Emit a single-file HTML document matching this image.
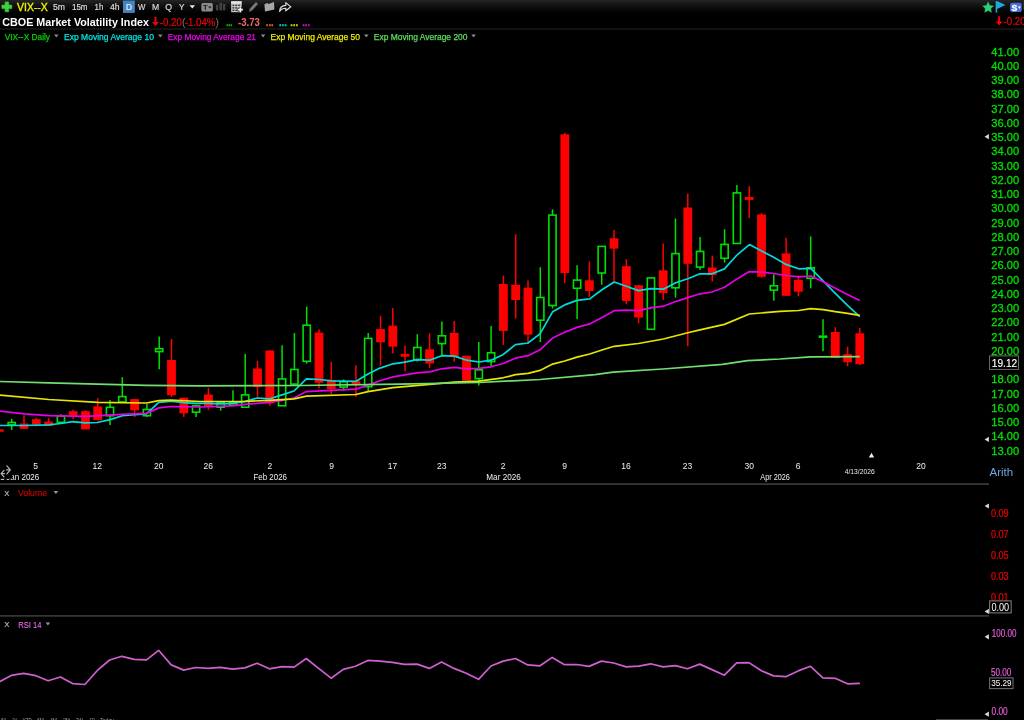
<!DOCTYPE html>
<html><head><meta charset="utf-8"><title>VIX--X chart</title>
<style>
html,body{margin:0;padding:0;background:#000;}
body{width:1024px;height:720px;overflow:hidden;position:relative;font-family:"Liberation Sans",sans-serif;}
#hdr{position:absolute;left:0;top:0;width:1024px;height:14px;background:linear-gradient(#242424 0%,#151515 32%,#060606 72%,#000 100%);}
svg{position:absolute;left:0;top:0;will-change:transform;}
text{white-space:pre;}
</style></head><body>
<div id="hdr"></div>
<svg width="1024" height="720" viewBox="0 0 1024 720" font-family="Liberation Sans, sans-serif">
<path d="M5.1,2 h3.5 v3.1 h3.2 v3.5 h-3.2 v3.2 h-3.5 v-3.2 h-3.2 v-3.5 h3.2 z" fill="#3ed03e" stroke="#3ed03e" stroke-width="0.6" stroke-linejoin="round"/>
<text x="17.0" y="11.0" font-size="11" fill="#f0f000" textLength="30.8" lengthAdjust="spacingAndGlyphs"  stroke="#f0f000" stroke-width="0.35">VIX--X</text>
<text x="53.0" y="10.4" font-size="9.7" fill="#dcdcdc" textLength="12.0" lengthAdjust="spacingAndGlyphs"  stroke="#dcdcdc" stroke-width="0.2">5m</text>
<text x="72.0" y="10.4" font-size="9.7" fill="#dcdcdc" textLength="15.5" lengthAdjust="spacingAndGlyphs"  stroke="#dcdcdc" stroke-width="0.2">15m</text>
<text x="94.5" y="10.4" font-size="9.7" fill="#dcdcdc" textLength="8.8" lengthAdjust="spacingAndGlyphs"  stroke="#dcdcdc" stroke-width="0.2">1h</text>
<text x="110.0" y="10.4" font-size="9.7" fill="#dcdcdc" textLength="9.6" lengthAdjust="spacingAndGlyphs"  stroke="#dcdcdc" stroke-width="0.2">4h</text>
<rect x="123" y="0.5" width="11.8" height="12.4" fill="#4584c0"/>
<text x="126.0" y="10.4" font-size="9.7" fill="#e8f0ff" textLength="6.0" lengthAdjust="spacingAndGlyphs"  stroke="#e8f0ff" stroke-width="0.2">D</text>
<text x="138.0" y="10.4" font-size="9.7" fill="#dcdcdc" textLength="7.4" lengthAdjust="spacingAndGlyphs"  stroke="#dcdcdc" stroke-width="0.2">W</text>
<text x="152.0" y="10.4" font-size="9.7" fill="#dcdcdc" textLength="7.2" lengthAdjust="spacingAndGlyphs"  stroke="#dcdcdc" stroke-width="0.2">M</text>
<text x="165.3" y="10.4" font-size="9.7" fill="#dcdcdc" textLength="6.8" lengthAdjust="spacingAndGlyphs"  stroke="#dcdcdc" stroke-width="0.2">Q</text>
<text x="179.0" y="10.4" font-size="9.7" fill="#dcdcdc" textLength="5.4" lengthAdjust="spacingAndGlyphs"  stroke="#dcdcdc" stroke-width="0.2">Y</text>
<polygon points="189.6,5.2 195,5.2 192.3,8.6" fill="#eee"/>
<rect x="201.4" y="3" width="11.4" height="8.6" rx="1.6" fill="#8c8c8c"/>
<text x="203.0" y="10.3" font-size="7.6" fill="#1a1a1a" font-weight="bold" >T</text>
<polygon points="208.2,6.4 211.6,6.4 209.9,8.8" fill="#1a1a1a"/>
<g fill="#424242"><rect x="216" y="4.9" width="2.3" height="5.5"/><rect x="219.5" y="2.9" width="2.6" height="7.5"/><rect x="223" y="3.9" width="2.3" height="6.5"/></g>
<g><rect x="231.2" y="1.3" width="10.4" height="10.9" fill="#cfcfcf"/><rect x="231.2" y="1.3" width="10.4" height="2.2" fill="#e6e6e6"/><g fill="#3a3a3a"><rect x="232.4" y="4.6" width="2" height="1.5"/><rect x="235.3" y="4.6" width="2" height="1.5"/><rect x="238.2" y="4.6" width="2" height="1.5"/><rect x="232.4" y="7.1" width="2" height="1.5"/><rect x="235.3" y="7.1" width="2" height="1.5"/><rect x="232.4" y="9.6" width="2" height="1.5"/><rect x="235.3" y="9.6" width="2" height="1.5"/></g><path d="M240.3,6.9 v5.6 M237.5,9.7 h5.6" stroke="#222" stroke-width="3.2"/><path d="M240.3,7.3 v4.9 M237.9,9.7 h4.9" stroke="#f4f4f4" stroke-width="1.7"/></g>
<path d="M248.8,11.8 L249.8,8.6 L255.9,2.1 L258.1,4.1 L252,10.8 Z" fill="#6a6a6a"/><path d="M251,9.4 L256.6,3.4" stroke="#8e8e8e" stroke-width="1"/>
<path d="M264.4,4.2 L267.4,3 L268.6,4 L274,2 L274.4,9.6 L265,11.6 Z" fill="#a8a8a8"/>
<path d="M279.6,11.4 C279.8,7.6 282,5.6 285.8,5.4 L285.8,2.6 L290.8,6.8 L285.8,10.8 L285.8,8.2 C283,8.2 281,9 279.6,11.4 Z" fill="none" stroke="#e0e0e0" stroke-width="1.1" stroke-linejoin="round"/>
<polygon points="988.10,1.95 989.78,5.39 993.57,5.92 990.81,8.58 991.48,12.35 988.10,10.55 984.72,12.35 985.39,8.58 982.63,5.92 986.42,5.39" fill="#2fd07a" stroke="#2fd07a" stroke-width="0.4" stroke-linejoin="round"/>
<path d="M996.4,1.2 L996.4,12.6" stroke="#1ea8e0" stroke-width="1.5"/><polygon points="997,1.1 1005.5,5.1 997,8.9" fill="#1ea8e0"/>
<rect x="1010.2" y="2.8" width="11.5" height="9.2" rx="1.7" fill="#4a6fd8"/>
<text x="1011.6" y="10.7" font-size="8.8" fill="#fff" font-weight="bold"  stroke="#fff" stroke-width="0.3">S</text>
<polygon points="1017.9,6.6 1020.9,6.6 1019.4,9.1" fill="#fff"/>
<rect x="1023" y="1.4" width="1" height="8.6" fill="#2c2c2c"/>
<text x="2.3" y="25.6" font-size="10.6" fill="#fff" textLength="146.6" lengthAdjust="spacingAndGlyphs" font-weight="bold" >CBOE Market Volatility Index</text>
<path d="M155.5,16.7 V23.0" stroke="#ff0000" stroke-width="1.9" fill="none"/><polygon points="152.1,21.9 158.9,21.9 155.5,26.0" fill="#ff0000"/>
<text x="159.8" y="25.9" font-size="10.6" fill="#f00000" textLength="22.0" lengthAdjust="spacingAndGlyphs"  stroke="#f00000" stroke-width="0.2">-0.20</text>
<text x="182.0" y="25.9" font-size="10.4" fill="#778" >(</text>
<text x="184.8" y="25.9" font-size="10.6" fill="#f00000" textLength="30.6" lengthAdjust="spacingAndGlyphs"  stroke="#f00000" stroke-width="0.2">-1.04%</text>
<text x="215.6" y="25.9" font-size="10.4" fill="#778" >)</text>
<text x="226.3" y="26.0" font-size="11" fill="#00d000" textLength="6.0" lengthAdjust="spacingAndGlyphs" font-weight="bold"  stroke="#00d000" stroke-width="0.3">...</text>
<text x="238.0" y="25.9" font-size="10.6" fill="#f06a6a" textLength="21.8" lengthAdjust="spacingAndGlyphs" font-weight="bold" >-3.73</text>
<text x="265.8" y="26.0" font-size="11" fill="#e07000" textLength="7.8" lengthAdjust="spacingAndGlyphs" font-weight="bold"  stroke="#e07000" stroke-width="0.3">...</text>
<text x="279.0" y="26.0" font-size="11" fill="#00d0d0" textLength="7.8" lengthAdjust="spacingAndGlyphs" font-weight="bold"  stroke="#00d0d0" stroke-width="0.3">...</text>
<text x="290.3" y="26.0" font-size="11" fill="#d8d800" textLength="7.8" lengthAdjust="spacingAndGlyphs" font-weight="bold"  stroke="#d8d800" stroke-width="0.3">...</text>
<text x="302.2" y="26.0" font-size="11" fill="#e000e0" textLength="7.8" lengthAdjust="spacingAndGlyphs" font-weight="bold"  stroke="#e000e0" stroke-width="0.3">...</text>
<path d="M999.1,16.3 V22.6" stroke="#ff0000" stroke-width="1.9" fill="none"/><polygon points="995.7,21.5 1002.5,21.5 999.1,25.6" fill="#ff0000"/>
<text x="1003.6" y="24.9" font-size="10.2" fill="#f00000" textLength="22.0" lengthAdjust="spacingAndGlyphs"  stroke="#f00000" stroke-width="0.2">-0.20</text>
<text x="4.7" y="39.6" font-size="9.2" fill="#00d400" textLength="45.3" lengthAdjust="spacingAndGlyphs"  stroke="#00d400" stroke-width="0.25">VIX--X Daily</text>
<polygon points="54.0,34.6 58.6,34.6 56.3,37.4" fill="#888"/>
<text x="64.0" y="39.6" font-size="9.2" fill="#00e4e4" textLength="89.9" lengthAdjust="spacingAndGlyphs"  stroke="#00e4e4" stroke-width="0.25">Exp Moving Average 10</text>
<polygon points="158.0,34.6 162.6,34.6 160.3,37.4" fill="#888"/>
<text x="167.7" y="39.6" font-size="9.2" fill="#f000f0" textLength="88.3" lengthAdjust="spacingAndGlyphs"  stroke="#f000f0" stroke-width="0.25">Exp Moving Average 21</text>
<polygon points="260.8,34.6 265.4,34.6 263.1,37.4" fill="#888"/>
<text x="270.5" y="39.6" font-size="9.2" fill="#ecec00" textLength="89.5" lengthAdjust="spacingAndGlyphs"  stroke="#ecec00" stroke-width="0.25">Exp Moving Average 50</text>
<polygon points="364.0,34.6 368.6,34.6 366.3,37.4" fill="#888"/>
<text x="373.8" y="39.6" font-size="9.2" fill="#5ce05c" textLength="93.7" lengthAdjust="spacingAndGlyphs"  stroke="#5ce05c" stroke-width="0.25">Exp Moving Average 200</text>
<polygon points="471.3,34.6 475.9,34.6 473.6,37.4" fill="#888"/>
<rect x="-5.0" y="429.4" width="8.8" height="2.3" fill="#ff0000"/>
<line x1="11.7" y1="419.0" x2="11.7" y2="422.5" stroke="#00e000" stroke-width="1.5"/>
<line x1="11.7" y1="424.9" x2="11.7" y2="430.0" stroke="#00e000" stroke-width="1.5"/>
<rect x="8.1" y="422.5" width="7.2" height="2.4" fill="none" stroke="#00e000" stroke-width="1.6"/>
<line x1="24.0" y1="415.3" x2="24.0" y2="428.8" stroke="#ff0000" stroke-width="1.5"/>
<rect x="19.6" y="423.5" width="8.8" height="5.3" fill="#ff0000"/>
<line x1="36.3" y1="417.7" x2="36.3" y2="426.4" stroke="#ff0000" stroke-width="1.5"/>
<rect x="31.9" y="419.2" width="8.8" height="5.3" fill="#ff0000"/>
<line x1="48.6" y1="418.2" x2="48.6" y2="426.0" stroke="#ff0000" stroke-width="1.5"/>
<rect x="44.2" y="421.6" width="8.8" height="4.4" fill="#ff0000"/>
<line x1="60.9" y1="414.3" x2="60.9" y2="416.1" stroke="#00e000" stroke-width="1.5"/>
<rect x="57.3" y="416.1" width="7.2" height="6.2" fill="none" stroke="#00e000" stroke-width="1.6"/>
<line x1="73.2" y1="409.5" x2="73.2" y2="419.2" stroke="#ff0000" stroke-width="1.5"/>
<rect x="68.8" y="411.2" width="8.8" height="4.5" fill="#ff0000"/>
<line x1="85.5" y1="410.3" x2="85.5" y2="429.4" stroke="#ff0000" stroke-width="1.5"/>
<rect x="81.1" y="411.2" width="8.8" height="18.2" fill="#ff0000"/>
<line x1="97.7" y1="398.1" x2="97.7" y2="420.2" stroke="#ff0000" stroke-width="1.5"/>
<rect x="93.3" y="406.5" width="8.8" height="13.7" fill="#ff0000"/>
<line x1="110.0" y1="400.1" x2="110.0" y2="407.3" stroke="#00e000" stroke-width="1.5"/>
<line x1="110.0" y1="415.7" x2="110.0" y2="424.9" stroke="#00e000" stroke-width="1.5"/>
<rect x="106.4" y="407.3" width="7.2" height="8.4" fill="none" stroke="#00e000" stroke-width="1.6"/>
<line x1="122.3" y1="377.2" x2="122.3" y2="396.6" stroke="#00e000" stroke-width="1.5"/>
<rect x="118.7" y="396.6" width="7.2" height="5.4" fill="none" stroke="#00e000" stroke-width="1.6"/>
<line x1="134.6" y1="399.1" x2="134.6" y2="417.1" stroke="#ff0000" stroke-width="1.5"/>
<rect x="130.2" y="399.1" width="8.8" height="11.3" fill="#ff0000"/>
<line x1="146.9" y1="404.0" x2="146.9" y2="409.5" stroke="#00e000" stroke-width="1.5"/>
<line x1="146.9" y1="415.7" x2="146.9" y2="417.0" stroke="#00e000" stroke-width="1.5"/>
<rect x="143.3" y="409.5" width="7.2" height="6.2" fill="none" stroke="#00e000" stroke-width="1.6"/>
<line x1="159.2" y1="336.6" x2="159.2" y2="348.7" stroke="#00e000" stroke-width="1.5"/>
<line x1="159.2" y1="351.6" x2="159.2" y2="369.2" stroke="#00e000" stroke-width="1.5"/>
<rect x="155.6" y="348.7" width="7.2" height="2.9" fill="none" stroke="#00e000" stroke-width="1.6"/>
<line x1="171.5" y1="338.9" x2="171.5" y2="397.1" stroke="#ff0000" stroke-width="1.5"/>
<rect x="167.1" y="360.0" width="8.8" height="35.2" fill="#ff0000"/>
<line x1="183.8" y1="397.7" x2="183.8" y2="417.0" stroke="#ff0000" stroke-width="1.5"/>
<rect x="179.4" y="397.7" width="8.8" height="15.5" fill="#ff0000"/>
<line x1="196.1" y1="412.2" x2="196.1" y2="417.0" stroke="#00e000" stroke-width="1.5"/>
<rect x="192.5" y="405.9" width="7.2" height="6.3" fill="none" stroke="#00e000" stroke-width="1.6"/>
<line x1="208.4" y1="387.7" x2="208.4" y2="410.1" stroke="#ff0000" stroke-width="1.5"/>
<rect x="204.0" y="394.5" width="8.8" height="11.7" fill="#ff0000"/>
<line x1="220.7" y1="407.2" x2="220.7" y2="410.7" stroke="#00e000" stroke-width="1.5"/>
<rect x="217.1" y="402.9" width="7.2" height="4.3" fill="none" stroke="#00e000" stroke-width="1.6"/>
<line x1="233.0" y1="390.2" x2="233.0" y2="402.3" stroke="#00e000" stroke-width="1.5"/>
<rect x="229.4" y="402.3" width="7.2" height="2.9" fill="none" stroke="#00e000" stroke-width="1.6"/>
<line x1="245.2" y1="353.9" x2="245.2" y2="394.9" stroke="#00e000" stroke-width="1.5"/>
<rect x="241.6" y="394.9" width="7.2" height="12.3" fill="none" stroke="#00e000" stroke-width="1.6"/>
<line x1="257.5" y1="360.9" x2="257.5" y2="397.0" stroke="#ff0000" stroke-width="1.5"/>
<rect x="253.1" y="368.5" width="8.8" height="18.6" fill="#ff0000"/>
<line x1="269.8" y1="350.5" x2="269.8" y2="405.8" stroke="#ff0000" stroke-width="1.5"/>
<rect x="265.4" y="350.5" width="8.8" height="52.8" fill="#ff0000"/>
<line x1="282.1" y1="345.3" x2="282.1" y2="378.9" stroke="#00e000" stroke-width="1.5"/>
<rect x="278.5" y="378.9" width="7.2" height="26.9" fill="none" stroke="#00e000" stroke-width="1.6"/>
<line x1="294.4" y1="333.0" x2="294.4" y2="369.5" stroke="#00e000" stroke-width="1.5"/>
<rect x="290.8" y="369.5" width="7.2" height="14.6" fill="none" stroke="#00e000" stroke-width="1.6"/>
<line x1="306.7" y1="306.6" x2="306.7" y2="325.2" stroke="#00e000" stroke-width="1.5"/>
<line x1="306.7" y1="361.3" x2="306.7" y2="363.6" stroke="#00e000" stroke-width="1.5"/>
<rect x="303.1" y="325.2" width="7.2" height="36.1" fill="none" stroke="#00e000" stroke-width="1.6"/>
<line x1="319.0" y1="329.5" x2="319.0" y2="388.6" stroke="#ff0000" stroke-width="1.5"/>
<rect x="314.6" y="332.6" width="8.8" height="50.2" fill="#ff0000"/>
<line x1="331.3" y1="361.7" x2="331.3" y2="394.1" stroke="#ff0000" stroke-width="1.5"/>
<rect x="326.9" y="379.8" width="8.8" height="9.2" fill="#ff0000"/>
<line x1="343.6" y1="379.5" x2="343.6" y2="381.8" stroke="#00e000" stroke-width="1.5"/>
<line x1="343.6" y1="387.1" x2="343.6" y2="390.6" stroke="#00e000" stroke-width="1.5"/>
<rect x="340.0" y="381.8" width="7.2" height="5.3" fill="none" stroke="#00e000" stroke-width="1.6"/>
<line x1="355.9" y1="365.2" x2="355.9" y2="396.8" stroke="#ff0000" stroke-width="1.5"/>
<rect x="351.5" y="380.8" width="8.8" height="3.9" fill="#ff0000"/>
<line x1="368.2" y1="333.0" x2="368.2" y2="338.4" stroke="#00e000" stroke-width="1.5"/>
<line x1="368.2" y1="386.7" x2="368.2" y2="391.0" stroke="#00e000" stroke-width="1.5"/>
<rect x="364.6" y="338.4" width="7.2" height="48.3" fill="none" stroke="#00e000" stroke-width="1.6"/>
<line x1="380.5" y1="315.8" x2="380.5" y2="365.8" stroke="#ff0000" stroke-width="1.5"/>
<rect x="376.1" y="329.1" width="8.8" height="13.2" fill="#ff0000"/>
<line x1="392.8" y1="308.0" x2="392.8" y2="353.5" stroke="#ff0000" stroke-width="1.5"/>
<rect x="388.4" y="325.7" width="8.8" height="20.9" fill="#ff0000"/>
<line x1="405.0" y1="345.4" x2="405.0" y2="371.3" stroke="#ff0000" stroke-width="1.5"/>
<rect x="400.6" y="353.8" width="8.8" height="2.9" fill="#ff0000"/>
<line x1="417.3" y1="334.2" x2="417.3" y2="347.5" stroke="#00e000" stroke-width="1.5"/>
<line x1="417.3" y1="359.6" x2="417.3" y2="361.6" stroke="#00e000" stroke-width="1.5"/>
<rect x="413.7" y="347.5" width="7.2" height="12.1" fill="none" stroke="#00e000" stroke-width="1.6"/>
<line x1="429.6" y1="333.2" x2="429.6" y2="367.8" stroke="#ff0000" stroke-width="1.5"/>
<rect x="425.2" y="349.3" width="8.8" height="14.2" fill="#ff0000"/>
<line x1="441.9" y1="321.5" x2="441.9" y2="335.8" stroke="#00e000" stroke-width="1.5"/>
<line x1="441.9" y1="343.6" x2="441.9" y2="356.1" stroke="#00e000" stroke-width="1.5"/>
<rect x="438.3" y="335.8" width="7.2" height="7.8" fill="none" stroke="#00e000" stroke-width="1.6"/>
<line x1="454.2" y1="320.9" x2="454.2" y2="361.6" stroke="#ff0000" stroke-width="1.5"/>
<rect x="449.8" y="332.9" width="8.8" height="24.2" fill="#ff0000"/>
<rect x="462.1" y="355.7" width="8.8" height="24.8" fill="#ff0000"/>
<line x1="478.8" y1="342.0" x2="478.8" y2="369.8" stroke="#00e000" stroke-width="1.5"/>
<line x1="478.8" y1="378.6" x2="478.8" y2="385.6" stroke="#00e000" stroke-width="1.5"/>
<rect x="475.2" y="369.8" width="7.2" height="8.8" fill="none" stroke="#00e000" stroke-width="1.6"/>
<line x1="491.1" y1="326.0" x2="491.1" y2="352.8" stroke="#00e000" stroke-width="1.5"/>
<line x1="491.1" y1="361.6" x2="491.1" y2="366.0" stroke="#00e000" stroke-width="1.5"/>
<rect x="487.5" y="352.8" width="7.2" height="8.8" fill="none" stroke="#00e000" stroke-width="1.6"/>
<line x1="503.4" y1="275.6" x2="503.4" y2="345.0" stroke="#ff0000" stroke-width="1.5"/>
<rect x="499.0" y="284.0" width="8.8" height="46.9" fill="#ff0000"/>
<line x1="515.7" y1="234.3" x2="515.7" y2="318.6" stroke="#ff0000" stroke-width="1.5"/>
<rect x="511.3" y="284.8" width="8.8" height="15.2" fill="#ff0000"/>
<line x1="528.0" y1="280.5" x2="528.0" y2="344.0" stroke="#ff0000" stroke-width="1.5"/>
<rect x="523.6" y="287.7" width="8.8" height="46.9" fill="#ff0000"/>
<line x1="540.3" y1="267.2" x2="540.3" y2="297.5" stroke="#00e000" stroke-width="1.5"/>
<line x1="540.3" y1="320.2" x2="540.3" y2="342.0" stroke="#00e000" stroke-width="1.5"/>
<rect x="536.7" y="297.5" width="7.2" height="22.7" fill="none" stroke="#00e000" stroke-width="1.6"/>
<line x1="552.5" y1="209.3" x2="552.5" y2="215.1" stroke="#00e000" stroke-width="1.5"/>
<line x1="552.5" y1="305.5" x2="552.5" y2="308.4" stroke="#00e000" stroke-width="1.5"/>
<rect x="548.9" y="215.1" width="7.2" height="90.4" fill="none" stroke="#00e000" stroke-width="1.6"/>
<line x1="564.8" y1="132.7" x2="564.8" y2="282.9" stroke="#ff0000" stroke-width="1.5"/>
<rect x="560.4" y="134.3" width="8.8" height="138.8" fill="#ff0000"/>
<line x1="577.1" y1="265.3" x2="577.1" y2="280.1" stroke="#00e000" stroke-width="1.5"/>
<line x1="577.1" y1="288.3" x2="577.1" y2="319.0" stroke="#00e000" stroke-width="1.5"/>
<rect x="573.5" y="280.1" width="7.2" height="8.2" fill="none" stroke="#00e000" stroke-width="1.6"/>
<line x1="589.4" y1="261.4" x2="589.4" y2="297.1" stroke="#ff0000" stroke-width="1.5"/>
<rect x="585.0" y="280.3" width="8.8" height="10.7" fill="#ff0000"/>
<line x1="601.7" y1="273.0" x2="601.7" y2="284.7" stroke="#00e000" stroke-width="1.5"/>
<rect x="598.1" y="246.4" width="7.2" height="26.6" fill="none" stroke="#00e000" stroke-width="1.6"/>
<line x1="614.0" y1="230.0" x2="614.0" y2="281.4" stroke="#ff0000" stroke-width="1.5"/>
<rect x="609.6" y="238.3" width="8.8" height="10.3" fill="#ff0000"/>
<line x1="626.3" y1="259.3" x2="626.3" y2="304.3" stroke="#ff0000" stroke-width="1.5"/>
<rect x="621.9" y="266.2" width="8.8" height="34.7" fill="#ff0000"/>
<line x1="638.6" y1="285.0" x2="638.6" y2="323.4" stroke="#ff0000" stroke-width="1.5"/>
<rect x="634.2" y="285.3" width="8.8" height="32.2" fill="#ff0000"/>
<rect x="647.3" y="277.9" width="7.2" height="51.4" fill="none" stroke="#00e000" stroke-width="1.6"/>
<line x1="663.2" y1="243.5" x2="663.2" y2="300.0" stroke="#ff0000" stroke-width="1.5"/>
<rect x="658.8" y="270.3" width="8.8" height="22.8" fill="#ff0000"/>
<line x1="675.5" y1="218.5" x2="675.5" y2="253.6" stroke="#00e000" stroke-width="1.5"/>
<line x1="675.5" y1="287.8" x2="675.5" y2="297.6" stroke="#00e000" stroke-width="1.5"/>
<rect x="671.9" y="253.6" width="7.2" height="34.2" fill="none" stroke="#00e000" stroke-width="1.6"/>
<line x1="687.8" y1="193.4" x2="687.8" y2="346.3" stroke="#ff0000" stroke-width="1.5"/>
<rect x="683.4" y="207.5" width="8.8" height="56.3" fill="#ff0000"/>
<line x1="700.1" y1="237.1" x2="700.1" y2="251.4" stroke="#00e000" stroke-width="1.5"/>
<line x1="700.1" y1="267.1" x2="700.1" y2="270.1" stroke="#00e000" stroke-width="1.5"/>
<rect x="696.5" y="251.4" width="7.2" height="15.7" fill="none" stroke="#00e000" stroke-width="1.6"/>
<line x1="712.3" y1="255.6" x2="712.3" y2="281.4" stroke="#ff0000" stroke-width="1.5"/>
<rect x="707.9" y="267.5" width="8.8" height="7.5" fill="#ff0000"/>
<line x1="724.6" y1="229.2" x2="724.6" y2="244.4" stroke="#00e000" stroke-width="1.5"/>
<line x1="724.6" y1="258.3" x2="724.6" y2="262.6" stroke="#00e000" stroke-width="1.5"/>
<rect x="721.0" y="244.4" width="7.2" height="13.9" fill="none" stroke="#00e000" stroke-width="1.6"/>
<line x1="736.9" y1="185.0" x2="736.9" y2="192.9" stroke="#00e000" stroke-width="1.5"/>
<rect x="733.3" y="192.9" width="7.2" height="50.6" fill="none" stroke="#00e000" stroke-width="1.6"/>
<line x1="749.2" y1="186.2" x2="749.2" y2="217.9" stroke="#ff0000" stroke-width="1.5"/>
<rect x="744.8" y="197.0" width="8.8" height="2.9" fill="#ff0000"/>
<line x1="761.5" y1="213.0" x2="761.5" y2="277.8" stroke="#ff0000" stroke-width="1.5"/>
<rect x="757.1" y="214.5" width="8.8" height="62.3" fill="#ff0000"/>
<line x1="773.8" y1="274.5" x2="773.8" y2="285.8" stroke="#00e000" stroke-width="1.5"/>
<line x1="773.8" y1="290.1" x2="773.8" y2="300.7" stroke="#00e000" stroke-width="1.5"/>
<rect x="770.2" y="285.8" width="7.2" height="4.3" fill="none" stroke="#00e000" stroke-width="1.6"/>
<line x1="786.1" y1="237.8" x2="786.1" y2="295.8" stroke="#ff0000" stroke-width="1.5"/>
<rect x="781.7" y="253.4" width="8.8" height="42.4" fill="#ff0000"/>
<line x1="798.4" y1="275.4" x2="798.4" y2="296.3" stroke="#ff0000" stroke-width="1.5"/>
<rect x="794.0" y="279.8" width="8.8" height="11.9" fill="#ff0000"/>
<line x1="810.7" y1="236.4" x2="810.7" y2="267.8" stroke="#00e000" stroke-width="1.5"/>
<line x1="810.7" y1="278.3" x2="810.7" y2="288.4" stroke="#00e000" stroke-width="1.5"/>
<rect x="807.1" y="267.8" width="7.2" height="10.5" fill="none" stroke="#00e000" stroke-width="1.6"/>
<line x1="823.0" y1="319.2" x2="823.0" y2="335.5" stroke="#00e000" stroke-width="1.5"/>
<line x1="823.0" y1="337.8" x2="823.0" y2="351.3" stroke="#00e000" stroke-width="1.5"/>
<rect x="818.6" y="335.4" width="8.8" height="2.5" fill="#00e000"/>
<line x1="835.3" y1="327.2" x2="835.3" y2="358.0" stroke="#ff0000" stroke-width="1.5"/>
<rect x="830.9" y="332.0" width="8.8" height="26.0" fill="#ff0000"/>
<line x1="847.6" y1="346.7" x2="847.6" y2="366.3" stroke="#ff0000" stroke-width="1.5"/>
<rect x="843.2" y="354.2" width="8.8" height="8.0" fill="#ff0000"/>
<line x1="859.8" y1="328.0" x2="859.8" y2="365.0" stroke="#ff0000" stroke-width="1.5"/>
<rect x="855.4" y="333.3" width="8.8" height="30.9" fill="#ff0000"/>
<polyline fill="none" stroke="#00dcdc" stroke-width="1.7" stroke-linejoin="round" stroke-linecap="butt" points="0.0,425.5 23.4,425.5 48.8,424.9 60.7,423.5 72.9,421.6 85.2,422.9 97.1,422.5 110.2,419.6 122.3,415.7 134.4,414.7 146.5,413.8 158.8,402.4 171.0,401.1 183.8,402.6 196.0,403.4 208.2,403.3 220.5,403.9 232.6,403.3 245.3,401.3 257.6,398.0 269.7,398.8 282.0,394.9 294.0,391.0 306.4,378.9 319.1,379.5 331.4,380.8 343.6,381.2 355.7,381.4 368.0,374.0 380.0,368.1 393.0,363.8 405.0,362.1 417.0,359.6 429.6,360.2 441.7,355.7 454.4,356.1 466.7,360.2 479.0,362.0 491.0,360.2 503.0,354.7 515.5,344.6 528.0,343.0 540.0,333.8 552.6,311.8 564.7,304.9 577.0,300.4 589.7,298.9 602.0,289.8 614.2,282.0 626.3,286.3 638.4,290.6 650.7,288.6 663.4,289.2 675.7,282.8 687.8,278.7 700.0,273.8 712.0,273.8 724.5,268.9 737.2,254.8 749.4,244.6 761.6,251.0 773.7,257.3 786.0,264.4 798.7,268.8 810.8,268.4 823.2,281.0 835.3,293.3 847.5,305.3 859.7,316.7"/>
<polyline fill="none" stroke="#e600e6" stroke-width="1.7" stroke-linejoin="round" stroke-linecap="butt" points="0.0,411.2 24.4,413.8 48.8,415.7 86.0,416.3 122.3,414.3 146.5,413.4 158.8,407.9 171.0,406.5 200.0,407.0 232.6,405.8 245.3,404.3 269.7,402.3 282.0,400.4 294.0,398.0 306.4,391.6 355.7,389.2 368.0,385.1 380.0,380.8 393.0,376.9 417.0,372.9 429.6,371.9 441.7,368.8 454.4,367.4 466.7,368.8 479.0,368.4 491.0,366.8 503.0,363.5 515.5,358.2 528.0,355.7 540.0,349.8 552.6,338.1 564.7,332.3 577.0,327.4 589.7,323.9 602.0,317.5 614.2,310.7 626.3,310.1 638.4,310.7 650.7,307.8 663.4,306.2 675.7,301.5 687.8,297.6 700.0,293.8 712.0,292.0 724.5,287.2 737.0,278.9 749.3,271.6 761.6,272.1 773.7,273.5 786.0,275.5 798.7,276.8 810.8,276.0 823.2,281.8 835.3,288.3 847.5,294.5 859.7,300.6"/>
<polyline fill="none" stroke="#e6e600" stroke-width="1.7" stroke-linejoin="round" stroke-linecap="butt" points="0.0,395.2 48.8,399.5 97.7,402.4 146.5,403.0 158.8,400.7 171.0,400.1 200.0,401.5 245.3,401.3 269.7,400.4 294.1,398.8 306.4,396.1 355.7,394.5 368.0,391.6 393.0,387.7 429.6,384.4 454.4,382.1 479.0,381.1 503.0,377.8 515.5,374.6 528.0,373.3 540.0,370.4 552.6,364.1 564.7,361.0 577.0,357.1 589.7,354.0 602.0,350.0 614.2,346.3 638.4,343.5 663.4,339.0 687.8,332.8 700.0,329.8 724.5,324.4 749.3,314.0 780.0,311.4 798.7,310.5 810.8,308.7 823.2,309.7 835.3,311.7 847.5,313.3 859.7,315.3"/>
<polyline fill="none" stroke="#6fe06f" stroke-width="1.7" stroke-linejoin="round" stroke-linecap="butt" points="0.0,381.5 48.8,382.8 97.7,384.1 146.5,385.4 200.0,385.8 300.0,385.5 400.0,384.2 479.0,382.5 540.0,379.5 595.0,374.6 613.0,372.2 663.0,369.0 722.5,364.4 747.5,360.6 780.0,359.0 810.8,356.8 859.7,356.7"/>
<polyline fill="none" stroke="#d060d0" stroke-width="1.7" stroke-linejoin="round" stroke-linecap="butt" points="-1.0,682.0 11.2,675.4 23.6,673.3 35.9,675.7 48.1,680.8 60.4,677.0 72.6,683.6 84.9,684.5 97.1,670.7 109.6,660.0 121.8,656.3 134.3,659.3 146.5,659.8 158.6,650.3 171.2,664.9 183.7,670.1 195.5,667.5 208.2,668.4 220.4,667.3 232.7,669.2 244.9,667.9 257.1,663.2 269.4,668.8 281.9,666.6 294.1,667.1 306.3,658.5 318.6,668.4 331.1,678.2 343.3,669.4 355.5,666.2 367.8,660.4 380.0,661.1 392.3,662.3 404.5,664.3 417.1,664.1 429.3,668.4 441.6,661.9 454.0,668.4 466.3,673.3 478.5,679.3 491.0,666.0 503.2,661.1 515.5,658.5 527.7,664.9 540.0,665.8 552.2,657.4 564.5,664.7 576.7,664.5 589.0,666.4 601.4,661.1 613.7,663.0 626.2,666.9 638.7,666.2 650.7,663.8 663.0,666.9 675.4,665.6 687.5,668.8 699.7,664.1 712.0,669.6 724.4,675.2 736.7,662.8 748.9,662.6 761.4,670.7 773.6,675.9 785.9,676.7 798.1,670.9 810.5,666.3 822.9,677.8 835.2,678.3 847.6,683.8 859.9,683.4"/>
<rect x="0" y="483.4" width="989" height="1.4" fill="#464646"/>
<rect x="0" y="615.1" width="989" height="1.6" fill="#3a3a3a"/>
<rect x="0" y="28" width="1024" height="2" fill="#121212"/>
<rect x="936" y="719" width="52" height="1" fill="#444"/>
<polygon points="984.6,136.7 988.9,134.1 988.9,139.3" fill="#ddd"/>
<polygon points="984.6,439.4 988.9,436.8 988.9,442.0" fill="#ddd"/>
<polygon points="984.6,506.0 988.9,503.4 988.9,508.6" fill="#ddd"/>
<polygon points="984.6,611.4 988.9,608.8 988.9,614.0" fill="#ddd"/>
<polygon points="984.6,636.8 988.9,634.2 988.9,639.4" fill="#ddd"/>
<polygon points="984.6,714.2 988.9,711.6 988.9,716.8" fill="#ddd"/>
<polygon points="868.8,457.5 874.2,457.5 871.5,452.8" fill="#eee"/>
<text x="991.3" y="55.7" font-size="11.4" fill="#00e000" textLength="27.8" lengthAdjust="spacingAndGlyphs"  stroke="#00e000" stroke-width="0.3">41.00</text>
<text x="991.3" y="69.9" font-size="11.4" fill="#00e000" textLength="27.8" lengthAdjust="spacingAndGlyphs"  stroke="#00e000" stroke-width="0.3">40.00</text>
<text x="991.3" y="84.2" font-size="11.4" fill="#00e000" textLength="27.8" lengthAdjust="spacingAndGlyphs"  stroke="#00e000" stroke-width="0.3">39.00</text>
<text x="991.3" y="98.4" font-size="11.4" fill="#00e000" textLength="27.8" lengthAdjust="spacingAndGlyphs"  stroke="#00e000" stroke-width="0.3">38.00</text>
<text x="991.3" y="112.7" font-size="11.4" fill="#00e000" textLength="27.8" lengthAdjust="spacingAndGlyphs"  stroke="#00e000" stroke-width="0.3">37.00</text>
<text x="991.3" y="126.9" font-size="11.4" fill="#00e000" textLength="27.8" lengthAdjust="spacingAndGlyphs"  stroke="#00e000" stroke-width="0.3">36.00</text>
<text x="991.3" y="141.2" font-size="11.4" fill="#00e000" textLength="27.8" lengthAdjust="spacingAndGlyphs"  stroke="#00e000" stroke-width="0.3">35.00</text>
<text x="991.3" y="155.4" font-size="11.4" fill="#00e000" textLength="27.8" lengthAdjust="spacingAndGlyphs"  stroke="#00e000" stroke-width="0.3">34.00</text>
<text x="991.3" y="169.7" font-size="11.4" fill="#00e000" textLength="27.8" lengthAdjust="spacingAndGlyphs"  stroke="#00e000" stroke-width="0.3">33.00</text>
<text x="991.3" y="183.9" font-size="11.4" fill="#00e000" textLength="27.8" lengthAdjust="spacingAndGlyphs"  stroke="#00e000" stroke-width="0.3">32.00</text>
<text x="991.3" y="198.1" font-size="11.4" fill="#00e000" textLength="27.8" lengthAdjust="spacingAndGlyphs"  stroke="#00e000" stroke-width="0.3">31.00</text>
<text x="991.3" y="212.4" font-size="11.4" fill="#00e000" textLength="27.8" lengthAdjust="spacingAndGlyphs"  stroke="#00e000" stroke-width="0.3">30.00</text>
<text x="991.3" y="226.6" font-size="11.4" fill="#00e000" textLength="27.8" lengthAdjust="spacingAndGlyphs"  stroke="#00e000" stroke-width="0.3">29.00</text>
<text x="991.3" y="240.9" font-size="11.4" fill="#00e000" textLength="27.8" lengthAdjust="spacingAndGlyphs"  stroke="#00e000" stroke-width="0.3">28.00</text>
<text x="991.3" y="255.1" font-size="11.4" fill="#00e000" textLength="27.8" lengthAdjust="spacingAndGlyphs"  stroke="#00e000" stroke-width="0.3">27.00</text>
<text x="991.3" y="269.4" font-size="11.4" fill="#00e000" textLength="27.8" lengthAdjust="spacingAndGlyphs"  stroke="#00e000" stroke-width="0.3">26.00</text>
<text x="991.3" y="283.6" font-size="11.4" fill="#00e000" textLength="27.8" lengthAdjust="spacingAndGlyphs"  stroke="#00e000" stroke-width="0.3">25.00</text>
<text x="991.3" y="297.8" font-size="11.4" fill="#00e000" textLength="27.8" lengthAdjust="spacingAndGlyphs"  stroke="#00e000" stroke-width="0.3">24.00</text>
<text x="991.3" y="312.1" font-size="11.4" fill="#00e000" textLength="27.8" lengthAdjust="spacingAndGlyphs"  stroke="#00e000" stroke-width="0.3">23.00</text>
<text x="991.3" y="326.3" font-size="11.4" fill="#00e000" textLength="27.8" lengthAdjust="spacingAndGlyphs"  stroke="#00e000" stroke-width="0.3">22.00</text>
<text x="991.3" y="340.6" font-size="11.4" fill="#00e000" textLength="27.8" lengthAdjust="spacingAndGlyphs"  stroke="#00e000" stroke-width="0.3">21.00</text>
<text x="991.3" y="354.8" font-size="11.4" fill="#00e000" textLength="27.8" lengthAdjust="spacingAndGlyphs"  stroke="#00e000" stroke-width="0.3">20.00</text>
<text x="991.3" y="369.1" font-size="11.4" fill="#00e000" textLength="27.8" lengthAdjust="spacingAndGlyphs"  stroke="#00e000" stroke-width="0.3">19.00</text>
<text x="991.3" y="383.3" font-size="11.4" fill="#00e000" textLength="27.8" lengthAdjust="spacingAndGlyphs"  stroke="#00e000" stroke-width="0.3">18.00</text>
<text x="991.3" y="397.6" font-size="11.4" fill="#00e000" textLength="27.8" lengthAdjust="spacingAndGlyphs"  stroke="#00e000" stroke-width="0.3">17.00</text>
<text x="991.3" y="411.8" font-size="11.4" fill="#00e000" textLength="27.8" lengthAdjust="spacingAndGlyphs"  stroke="#00e000" stroke-width="0.3">16.00</text>
<text x="991.3" y="426.0" font-size="11.4" fill="#00e000" textLength="27.8" lengthAdjust="spacingAndGlyphs"  stroke="#00e000" stroke-width="0.3">15.00</text>
<text x="991.3" y="440.3" font-size="11.4" fill="#00e000" textLength="27.8" lengthAdjust="spacingAndGlyphs"  stroke="#00e000" stroke-width="0.3">14.00</text>
<text x="991.3" y="454.5" font-size="11.4" fill="#00e000" textLength="27.8" lengthAdjust="spacingAndGlyphs"  stroke="#00e000" stroke-width="0.3">13.00</text>
<rect x="989.5" y="355.9" width="29.1" height="13.5" fill="#000"/><rect x="989.5" y="355.9" width="29.1" height="13.5" fill="none" stroke="#999" stroke-opacity="0.75" stroke-width="0.9"/>
<text x="991.8" y="366.9" font-size="11.2" fill="#fff" textLength="25.4" lengthAdjust="spacingAndGlyphs"  stroke="#fff" stroke-width="0.15">19.12</text>
<text x="989.6" y="476.4" font-size="11.4" fill="#6fa8dc" textLength="23.6" lengthAdjust="spacingAndGlyphs" >Arith</text>
<text x="990.9" y="516.5" font-size="10.2" fill="#ee0000" textLength="17.8" lengthAdjust="spacingAndGlyphs"  stroke="#ee0000" stroke-width="0.2">0.09</text>
<text x="990.9" y="537.6" font-size="10.2" fill="#ee0000" textLength="17.8" lengthAdjust="spacingAndGlyphs"  stroke="#ee0000" stroke-width="0.2">0.07</text>
<text x="990.9" y="558.7" font-size="10.2" fill="#ee0000" textLength="17.8" lengthAdjust="spacingAndGlyphs"  stroke="#ee0000" stroke-width="0.2">0.05</text>
<text x="990.9" y="579.8" font-size="10.2" fill="#ee0000" textLength="17.8" lengthAdjust="spacingAndGlyphs"  stroke="#ee0000" stroke-width="0.2">0.03</text>
<text x="990.9" y="600.9" font-size="10.2" fill="#ee0000" textLength="17.8" lengthAdjust="spacingAndGlyphs"  stroke="#ee0000" stroke-width="0.2">0.01</text>
<rect x="989.6" y="600.9" width="21.6" height="12" fill="#000" stroke="#777" stroke-width="1.1"/>
<text x="991.4" y="610.9" font-size="11" fill="#fff" textLength="17.8" lengthAdjust="spacingAndGlyphs" >0.00</text>
<text x="991.8" y="636.7" font-size="10.2" fill="#f060e0" textLength="24.6" lengthAdjust="spacingAndGlyphs"  stroke="#f060e0" stroke-width="0.15">100.00</text>
<text x="990.9" y="676.0" font-size="10.2" fill="#f060e0" textLength="20.4" lengthAdjust="spacingAndGlyphs"  stroke="#f060e0" stroke-width="0.15">50.00</text>
<text x="991.5" y="715.3" font-size="10.2" fill="#f060e0" textLength="16.2" lengthAdjust="spacingAndGlyphs"  stroke="#f060e0" stroke-width="0.15">0.00</text>
<rect x="989.6" y="677.9" width="23.4" height="10.7" fill="#000" stroke="#6c6c6c" stroke-width="1.1"/>
<text x="991.2" y="686.3" font-size="9.2" fill="#fff" textLength="20.4" lengthAdjust="spacingAndGlyphs" >35.29</text>
<text x="35.5" y="469.0" font-size="8.5" fill="#f0f0f0" text-anchor="middle" >5</text>
<text x="97.3" y="469.0" font-size="8.5" fill="#f0f0f0" text-anchor="middle" >12</text>
<text x="158.7" y="469.0" font-size="8.5" fill="#f0f0f0" text-anchor="middle" >20</text>
<text x="208.3" y="469.0" font-size="8.5" fill="#f0f0f0" text-anchor="middle" >26</text>
<text x="269.8" y="469.0" font-size="8.5" fill="#f0f0f0" text-anchor="middle" >2</text>
<text x="331.5" y="469.0" font-size="8.5" fill="#f0f0f0" text-anchor="middle" >9</text>
<text x="392.5" y="469.0" font-size="8.5" fill="#f0f0f0" text-anchor="middle" >17</text>
<text x="441.7" y="469.0" font-size="8.5" fill="#f0f0f0" text-anchor="middle" >23</text>
<text x="503.2" y="469.0" font-size="8.5" fill="#f0f0f0" text-anchor="middle" >2</text>
<text x="564.5" y="469.0" font-size="8.5" fill="#f0f0f0" text-anchor="middle" >9</text>
<text x="626.0" y="469.0" font-size="8.5" fill="#f0f0f0" text-anchor="middle" >16</text>
<text x="687.6" y="469.0" font-size="8.5" fill="#f0f0f0" text-anchor="middle" >23</text>
<text x="749.2" y="469.0" font-size="8.5" fill="#f0f0f0" text-anchor="middle" >30</text>
<text x="798.2" y="469.0" font-size="8.5" fill="#f0f0f0" text-anchor="middle" >6</text>
<text x="921.0" y="469.0" font-size="8.5" fill="#f0f0f0" text-anchor="middle" >20</text>
<text x="859.7" y="474.2" font-size="6.6" fill="#e8e8e8" text-anchor="middle" textLength="30.0" lengthAdjust="spacingAndGlyphs" >4/13/2026</text>
<text x="253.5" y="479.8" font-size="9" fill="#f0f0f0" textLength="33.5" lengthAdjust="spacingAndGlyphs" >Feb 2026</text>
<text x="486.3" y="479.8" font-size="9" fill="#f0f0f0" textLength="34.5" lengthAdjust="spacingAndGlyphs" >Mar 2026</text>
<text x="760.3" y="479.8" font-size="9" fill="#f0f0f0" textLength="29.6" lengthAdjust="spacingAndGlyphs" >Apr 2026</text>
<text x="6.3" y="479.8" font-size="9" fill="#f0f0f0" textLength="33.0" lengthAdjust="spacingAndGlyphs" >Jan 2026</text>
<text x="-12.5" y="479.8" font-size="9" fill="#f0f0f0" textLength="17.3" lengthAdjust="spacingAndGlyphs" >2025</text>
<rect x="0" y="462" width="12.4" height="16.7" fill="#000"/>
<text x="4.3" y="495.7" font-size="7.8" fill="#a4a4a4" textLength="5.2" lengthAdjust="spacingAndGlyphs" font-weight="bold" >X</text>
<text x="17.9" y="496.3" font-size="9.4" fill="#cc0000" textLength="29.3" lengthAdjust="spacingAndGlyphs"  stroke="#cc0000" stroke-width="0.15">Volume</text>
<polygon points="53.6,491 58.2,491 55.9,494" fill="#999"/>
<text x="4.3" y="627.1" font-size="7.8" fill="#a4a4a4" textLength="5.2" lengthAdjust="spacingAndGlyphs" font-weight="bold" >X</text>
<text x="18.3" y="627.8" font-size="9.4" fill="#dc6cdc" textLength="23.2" lengthAdjust="spacingAndGlyphs"  stroke="#dc6cdc" stroke-width="0.15">RSI 14</text>
<polygon points="45.7,622.6 50.1,622.6 47.9,625.5" fill="#999"/>
<text x="1.2" y="722.8" font-size="6.5" fill="#9a9a9a" textLength="5.0" lengthAdjust="spacingAndGlyphs" >5Y</text>
<text x="12.0" y="722.8" font-size="6.5" fill="#9a9a9a" textLength="5.0" lengthAdjust="spacingAndGlyphs" >1Y</text>
<text x="22.5" y="722.8" font-size="6.5" fill="#9a9a9a" textLength="9.5" lengthAdjust="spacingAndGlyphs" >YTD</text>
<text x="37.0" y="722.8" font-size="6.5" fill="#9a9a9a" textLength="7.0" lengthAdjust="spacingAndGlyphs" >6M</text>
<text x="50.0" y="722.8" font-size="6.5" fill="#9a9a9a" textLength="7.0" lengthAdjust="spacingAndGlyphs" >4M</text>
<text x="63.0" y="722.8" font-size="6.5" fill="#9a9a9a" textLength="7.0" lengthAdjust="spacingAndGlyphs" >3M</text>
<text x="76.0" y="722.8" font-size="6.5" fill="#9a9a9a" textLength="7.0" lengthAdjust="spacingAndGlyphs" >2W</text>
<text x="89.5" y="722.8" font-size="6.5" fill="#9a9a9a" textLength="5.5" lengthAdjust="spacingAndGlyphs" >1D</text>
<text x="100.0" y="722.8" font-size="6.5" fill="#9a9a9a" textLength="14.0" lengthAdjust="spacingAndGlyphs" >Today</text>
<g stroke="#b4b4b4" stroke-width="1.2" fill="none" stroke-linecap="round" stroke-linejoin="round"><path d="M4.0,470.4 L1.1,473.6 L4.0,476.8 M1.4,473.6 H4.4"/><path d="M6.9,465.8 L10.3,469.8 L6.9,473.8 M6.6,469.8 H10"/></g>
</svg>
</body></html>
